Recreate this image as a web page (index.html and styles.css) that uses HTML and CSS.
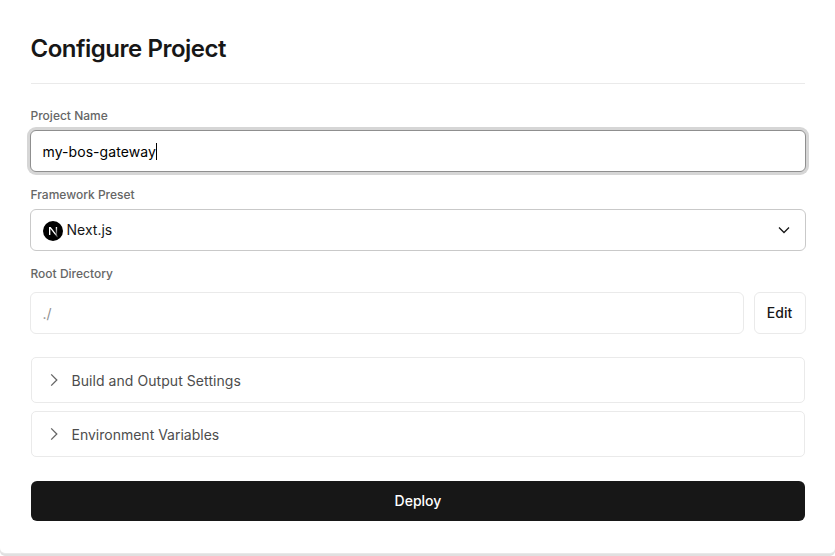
FILE: index.html
```html
<!DOCTYPE html>
<html lang="en">
<head>
<meta charset="utf-8">
<title>Configure Project</title>
<link rel="stylesheet" href="styles.css">
</head>
<body>
<main class="card">
  <h1 class="title">Configure Project</h1>
  <form class="form">
    <div class="field">
      <span class="label">Project Name</span>
      <div class="control focused"><span class="value">my-bos-gateway</span><span class="caret"></span></div>
    </div>
    <div class="field">
      <span class="label">Framework Preset</span>
      <div class="control select">
        <svg class="logo" viewBox="0 0 20 20" width="20" height="20"><defs><linearGradient id="a" x1="11.8" y1="12.5" x2="15" y2="16.5" gradientUnits="userSpaceOnUse"><stop stop-color="#fff"/><stop offset="1" stop-color="#fff" stop-opacity="0"/></linearGradient><linearGradient id="b" x1="13" y1="6" x2="13" y2="16" gradientUnits="userSpaceOnUse"><stop stop-color="#fff"/><stop offset="1" stop-color="#fff" stop-opacity="0"/></linearGradient></defs><circle cx="10" cy="10" r="10" fill="#000"/><path fill="url(#a)" d="M16.61 17.5 7.68 6H6v8h1.35V7.71l8.21 10.6q.55-.37 1.05-.81Z"/><path fill="url(#b)" d="M12.78 6h1.33v8h-1.33z"/></svg>
        <span class="value">Next.js</span>
        <svg class="chevron" viewBox="0 0 16 16" width="16" height="16"><path d="m3 5.5 5 5 5-5"/></svg>
      </div>
    </div>
    <div class="field">
      <span class="label">Root Directory</span>
      <div class="row">
        <div class="control disabled"><span class="value">./</span></div>
        <button class="edit" type="button">Edit</button>
      </div>
    </div>
    <div class="panels">
      <div class="panel"><svg class="arrow" viewBox="0 0 16 16" width="16" height="16"><path d="m5.2 2.4 5.6 5.6-5.6 5.6"/></svg><span class="build">Build and Output Settings</span></div>
      <div class="panel"><svg class="arrow" viewBox="0 0 16 16" width="16" height="16"><path d="m5.2 2.4 5.6 5.6-5.6 5.6"/></svg>Environment Variables</div>
    </div>
    <button class="deploy" type="button">Deploy</button>
  </form>
</main>
</body>
</html>
```
FILE: styles.css
```css
* { box-sizing: border-box; }
body { margin: 0; height: 556px; background: #fff; color: #171717; font-family: Inter, "Liberation Sans", sans-serif; overflow: hidden; }
.card { height: 553px; padding: 33px 30px 0 31px; background: #fff; border-radius: 0 0 5px 5px; box-shadow: 0 1px 0 #e8e8e8, 0 3px 0 #e0e0e0; }
.title { margin: 0 0 0; height: 51px; border-bottom: 1px solid #eaeaea; font-size: 24px; line-height: 32px; font-weight: 600; letter-spacing: -0.48px; text-indent: -0.5px; }
.form { padding-top: 24px; }
.field { margin: 0 -1px; }
.label { display: block; height: 22px; padding-left: 0.5px; font-size: 12px; line-height: 16px; font-weight: 500; color: #666; }
.control { display: flex; align-items: center; height: 42px; padding: 1px 12px 0 11.5px; border: 1px solid #c9c9c9; border-radius: 6px; font-size: 14px; background: #fff; }
.focused { border-color: #8f8f8f; box-shadow: 0 0 0 3px #d6d6d6; color: #000; }
.focused .value { letter-spacing: 0.07px; }
.caret { width: 1px; height: 17px; background: #000; }
.field + .field { margin-top: 15px; }
.select { padding: 0 12px; }
.select .value { margin-top: -1px; }
.logo { margin: 2px 3.5px 0 0; }
.chevron, .arrow { fill: none; stroke: currentColor; stroke-width: 1.3; }
.arrow { color: #666; }
.chevron { margin-left: auto; margin-right: 1px; }
.row { display: flex; gap: 10px; padding-top: 4px; }
.disabled { flex: 1; border-color: #eaeaea; color: #8f8f8f; }
.edit { width: 52px; height: 42px; padding: 0 1px 0 0; border: 1px solid #eaeaea; border-radius: 6px; background: #fff; color: #171717; font: 500 14px/20px Inter, sans-serif; }
.panels { display: grid; gap: 8px; margin-top: 23px; }
.panel { display: flex; align-items: center; gap: 9.5px; height: 46px; padding-left: 14px; border: 1px solid #eaeaea; border-radius: 5px; font-size: 14px; color: #4d4d4d; }
.build { letter-spacing: 0.06px; }
.deploy { display: block; width: 100%; height: 40px; margin-top: 24px; border: 0; border-radius: 6px; background: #171717; color: #fff; font: 500 14px/20px Inter, sans-serif; }
```
